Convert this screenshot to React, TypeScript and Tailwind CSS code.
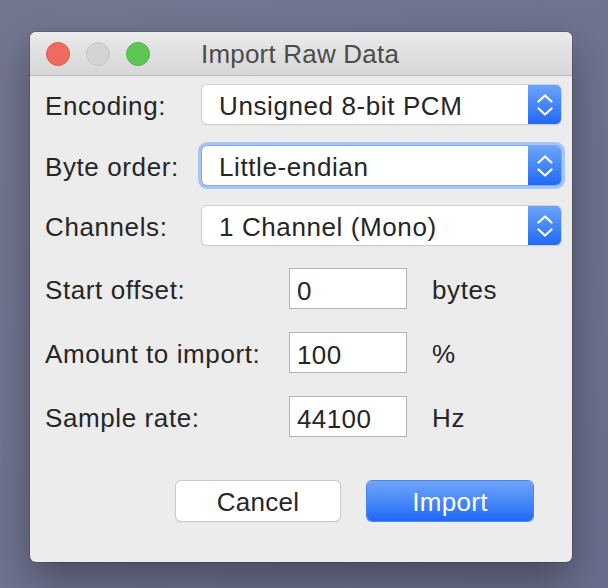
import React from "react";

const font = { fontFamily: '"Liberation Sans", Arial, sans-serif' };

function Chevrons() {
  return (
    <svg width="16" height="22" viewBox="0 0 16 22" fill="none" stroke="white" strokeWidth="2.2" strokeLinecap="round" strokeLinejoin="round">
      <path d="M1.5 7.5 L8 1.5 L14.5 7.5" />
      <path d="M1.5 14.5 L8 20.5 L14.5 14.5" />
    </svg>
  );
}

function Select({ value, focused }: { value: string; focused?: boolean }) {
  return (
    <div
      className={
        "flex h-[39px] w-[359px] rounded-[5px] bg-white " +
        (focused
          ? "shadow-[0_0_0_1px_#7fa9ec,0_0_0_4px_#a7c6f3]"
          : "shadow-[0_0_0_1px_#cfcfcf,0_1px_1px_rgba(0,0,0,0.25)]")
      }
    >
      <div className="flex flex-1 items-center pl-[17px] pt-[3px] text-[26px] leading-[30px] tracking-[0.6px] text-[#262626]">{value}</div>
      <div className="flex w-[33px] items-center justify-center rounded-r-[5px] bg-gradient-to-b from-[#6ba4f9] to-[#2168f6]">
        <Chevrons />
      </div>
    </div>
  );
}

function Field({ label, value, unit }: { label: string; value: string; unit: string }) {
  return (
    <div className="flex h-[41px] items-center">
      <div className="w-[244px] pt-[2px] text-[26px] leading-[30px] tracking-[0.6px] text-[#262626]">{label}</div>
      <div className="flex h-[41px] w-[118px] items-center border border-[#b3b3b3] bg-white pl-[7px] pt-[5px] text-[26px] leading-[30px] tracking-[0.4px] text-[#262626]">
        {value}
      </div>
      <div className="pl-[25px] pt-[2px] text-[26px] leading-[30px] tracking-[0.6px] text-[#262626]">{unit}</div>
    </div>
  );
}

export default function App() {
  return (
    <div className="h-[588px] w-[608px] bg-gradient-to-br from-[#73778f] via-[#6f7390] to-[#6a6e8c] pl-[30px] pt-[32px]" style={font}>
      <div className="flex h-[530px] w-[542px] flex-col overflow-hidden rounded-[6px] bg-[#ececec] shadow-[0_18px_40px_rgba(0,0,0,0.35),0_0_0_1px_rgba(0,0,0,0.12)]">
        <div className="relative flex h-[44px] items-center border-b border-[#bcbcbc] bg-gradient-to-b from-[#ebebeb] to-[#d6d6d6]">
          <div className="flex gap-[16px] pl-[16px]">
            <div className="h-[24px] w-[24px] rounded-full border border-[#e0574d] bg-[#f06a5f]" />
            <div className="h-[24px] w-[24px] rounded-full border border-[#c4c4c4] bg-[#d4d4d4]" />
            <div className="h-[24px] w-[24px] rounded-full border border-[#4cb43f] bg-[#5fc655]" />
          </div>
          <div className="pl-[51px] pt-[1px] text-[26px] leading-[30px] tracking-[0.2px] text-[#4c4c4c]">Import Raw Data</div>
        </div>

        <div className="flex flex-col pl-[15px] pt-[9px]">
          <div className="flex h-[39px] items-center">
            <div className="w-[157px] pt-[3px] text-[26px] leading-[30px] tracking-[0.6px] text-[#262626]">Encoding:</div>
            <Select value="Unsigned 8-bit PCM" />
          </div>
          <div className="mt-[22px] flex h-[39px] items-center">
            <div className="w-[157px] pt-[3px] text-[26px] leading-[30px] tracking-[0.6px] text-[#262626]">Byte order:</div>
            <Select value="Little-endian" focused />
          </div>
          <div className="mt-[21px] flex h-[39px] items-center">
            <div className="w-[157px] pt-[3px] text-[26px] leading-[30px] tracking-[0.6px] text-[#262626]">Channels:</div>
            <Select value="1 Channel (Mono)" />
          </div>

          <div className="mt-[23px] flex flex-col gap-[23px]">
            <Field label="Start offset:" value="0" unit="bytes" />
            <Field label="Amount to import:" value="100" unit="%" />
            <Field label="Sample rate:" value="44100" unit="Hz" />
          </div>

          <div className="mt-[44px] flex gap-[27px] pl-[131px]">
            <div className="flex h-[40px] w-[164px] items-center justify-center rounded-[5px] bg-white pt-[1px] text-[26px] leading-[30px] tracking-[0.3px] text-[#262626] shadow-[0_0_0_1px_#c9c9c9,0_1px_1px_rgba(0,0,0,0.25)]">
              Cancel
            </div>
            <div className="flex h-[40px] w-[166px] items-center justify-center rounded-[5px] bg-gradient-to-b from-[#6ea5f9] to-[#2068f6] pt-[1px] text-[26px] leading-[30px] tracking-[0.3px] text-white shadow-[0_0_0_1px_#4a86f0]">
              Import
            </div>
          </div>
        </div>
      </div>
    </div>
  );
}
